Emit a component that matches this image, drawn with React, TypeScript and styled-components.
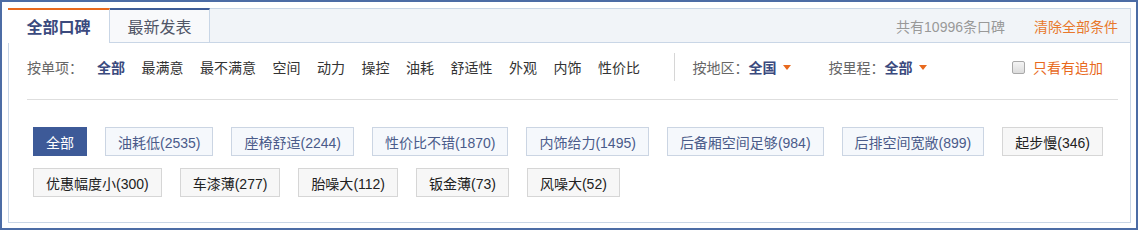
import styled, { createGlobalStyle } from "styled-components";

const GlobalStyle = createGlobalStyle`
  html, body {
    margin: 0;
    padding: 0;
    background: #fff;
  }
  body {
    font-family: "Liberation Sans", "Noto Sans CJK SC", sans-serif;
    font-size: 14px;
    color: #333;
  }
`;

const Frame = styled.div`
  box-sizing: border-box;
  width: 1138px;
  height: 230px;
  border: 2px solid #4c6ca5;
  padding: 6px 5px 0 6px;
`;

const Panel = styled.div`
  box-sizing: border-box;
  height: 215px;
  border: 1px solid #c9d6e6;
  background: #fff;
`;

const TabBar = styled.div`
  display: flex;
  align-items: stretch;
  height: 33px;
  background: #f1f4f8;
  border-bottom: 1px solid #c9d6e6;
`;

const Tab = styled.div<{ $active?: boolean }>`
  box-sizing: border-box;
  width: ${(p) => (p.$active ? "102px" : "100px")};
  margin-top: -1px;
  margin-left: ${(p) => (p.$active ? "-1px" : "0")};
  margin-bottom: ${(p) => (p.$active ? "-1px" : "0")};
  border-top: 2px solid ${(p) => (p.$active ? "#e8691d" : "#3e5c97")};
  border-right: 1px solid #c9d6e6;
  background: ${(p) => (p.$active ? "#fff" : "#f8f9fb")};
  color: ${(p) => (p.$active ? "#3b4a7e" : "#505566")};
  font-size: 16px;
  font-weight: ${(p) => (p.$active ? "bold" : "normal")};
  display: flex;
  align-items: center;
  justify-content: center;
  padding-bottom: 1px;
`;

const Summary = styled.div`
  margin-left: auto;
  display: flex;
  align-items: center;
  gap: 29px;
  padding-right: 12px;
`;

const Count = styled.span`
  color: #999;
`;

const ClearLink = styled.a`
  color: #e8782c;
  text-decoration: none;
  cursor: pointer;
`;

const Filters = styled.div`
  padding: 9px 12px 0 18px;
`;

const FilterRow = styled.div`
  display: flex;
  align-items: center;
  height: 30px;
`;

const Label = styled.span<{ $gap?: number }>`
  color: #666;
  margin-right: ${(p) => p.$gap ?? 14}px;
`;

const Option = styled.span<{ $on?: boolean }>`
  margin-right: 16.5px;
  color: ${(p) => (p.$on ? "#3b4a7e" : "#333")};
  font-weight: ${(p) => (p.$on ? "bold" : "normal")};
  cursor: pointer;
  white-space: nowrap;
`;

const Divider = styled.span`
  width: 1px;
  height: 28px;
  background: #d6d6d6;
  margin: 0 18px 0 17px;
`;

const Dropdown = styled.span`
  display: inline-flex;
  align-items: center;
  gap: 6px;
  margin-right: 38px;
  color: #3b4a7e;
  font-weight: bold;
  cursor: pointer;
`;

const Caret = styled.span`
  width: 0;
  height: 0;
  border-left: 4px solid transparent;
  border-right: 4px solid transparent;
  border-top: 5px solid #e8691d;
`;

const Check = styled.label`
  margin-left: auto;
  margin-right: 15px;
  display: flex;
  align-items: center;
  gap: 8px;
  color: #e8691d;
  cursor: pointer;
`;

const Box = styled.span`
  box-sizing: border-box;
  width: 13px;
  height: 13px;
  border: 1px solid #a9a9a9;
  border-radius: 2px;
  background: linear-gradient(#f4f4f4, #dcdcdc);
`;

const Rule = styled.div`
  height: 1px;
  background: #dedede;
  margin-top: 17px;
`;

const TagList = styled.div`
  display: flex;
  flex-wrap: wrap;
  column-gap: 18px;
  row-gap: 12px;
  padding: 27px 0 0 6px;
`;

type Tone = "active" | "good" | "bad";

const Tag = styled.span<{ $tone: Tone }>`
  box-sizing: border-box;
  height: 29px;
  padding: 0 12px;
  display: inline-flex;
  align-items: center;
  white-space: nowrap;
  cursor: pointer;
  border: 1px solid
    ${(p) =>
      p.$tone === "active" ? "#3d5a98" : p.$tone === "good" ? "#cbd5e3" : "#d6d6d6"};
  background: ${(p) =>
    p.$tone === "active" ? "#3d5a98" : p.$tone === "good" ? "#f5f8fc" : "#f7f7f7"};
  color: ${(p) =>
    p.$tone === "active" ? "#fff" : p.$tone === "good" ? "#4a5b8a" : "#222"};
`;

const options = ["全部", "最满意", "最不满意", "空间", "动力", "操控", "油耗", "舒适性", "外观", "内饰", "性价比"];

const tags: { name: string; count?: number; tone: Tone }[] = [
  { name: "全部", tone: "active" },
  { name: "油耗低", count: 2535, tone: "good" },
  { name: "座椅舒适", count: 2244, tone: "good" },
  { name: "性价比不错", count: 1870, tone: "good" },
  { name: "内饰给力", count: 1495, tone: "good" },
  { name: "后备厢空间足够", count: 984, tone: "good" },
  { name: "后排空间宽敞", count: 899, tone: "good" },
  { name: "起步慢", count: 346, tone: "bad" },
  { name: "优惠幅度小", count: 300, tone: "bad" },
  { name: "车漆薄", count: 277, tone: "bad" },
  { name: "胎噪大", count: 112, tone: "bad" },
  { name: "钣金薄", count: 73, tone: "bad" },
  { name: "风噪大", count: 52, tone: "bad" },
];

export default function App() {
  return (
    <>
      <GlobalStyle />
      <Frame>
        <Panel>
          <TabBar>
            <Tab $active>全部口碑</Tab>
            <Tab>最新发表</Tab>
            <Summary>
              <Count>共有10996条口碑</Count>
              <ClearLink>清除全部条件</ClearLink>
            </Summary>
          </TabBar>
          <Filters>
            <FilterRow>
              <Label>按单项：</Label>
              {options.map((o, i) => (
                <Option key={o} $on={i === 0}>
                  {o}
                </Option>
              ))}
              <Divider />
              <Label $gap={0}>按地区：</Label>
              <Dropdown>
                全国
                <Caret />
              </Dropdown>
              <Label $gap={0}>按里程：</Label>
              <Dropdown>
                全部
                <Caret />
              </Dropdown>
              <Check>
                <Box />
                只看有追加
              </Check>
            </FilterRow>
            <Rule />
            <TagList>
              {tags.map((t) => (
                <Tag key={t.name} $tone={t.tone}>
                  {t.name}
                  {t.count !== undefined && `(${t.count})`}
                </Tag>
              ))}
            </TagList>
          </Filters>
        </Panel>
      </Frame>
    </>
  );
}
